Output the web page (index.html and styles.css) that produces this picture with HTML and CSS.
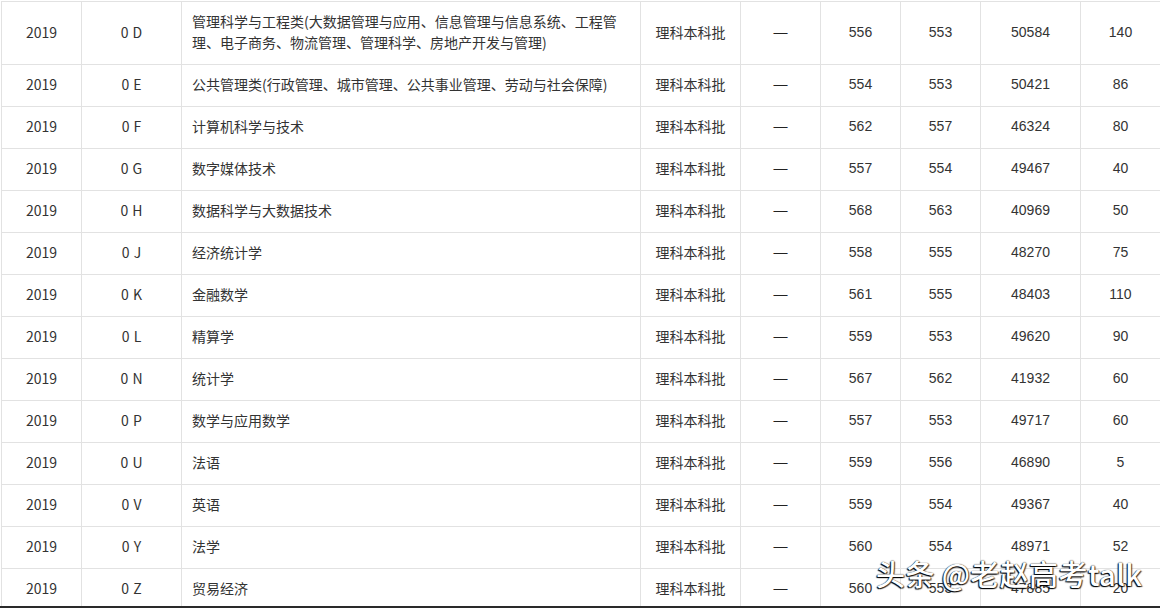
FILE: index.html
```html
<!DOCTYPE html>
<html lang="zh-CN">
<head>
<meta charset="utf-8">
<title>录取分数</title>
<link rel="stylesheet" href="styles.css">
</head>
<body>
<div class="frame">
  <table class="scores">
    <colgroup>
      <col class="c-year"><col class="c-code"><col class="c-major"><col class="c-batch"><col class="c-dash">
      <col class="c-num"><col class="c-num"><col class="c-rank"><col class="c-num">
    </colgroup>
    <tbody>
      <tr><td class="cn">2019</td><td class="cn">0 D</td><td class="major">管理科学与工程类(大数据管理与应用、信息管理与信息系统、工程管理、电子商务、物流管理、管理科学、房地产开发与管理)</td><td class="cn">理科本科批</td><td class="dash">—</td><td>556</td><td>553</td><td>50584</td><td>140</td></tr>
      <tr><td class="cn">2019</td><td class="cn">0 E</td><td class="major">公共管理类(行政管理、城市管理、公共事业管理、劳动与社会保障)</td><td class="cn">理科本科批</td><td class="dash">—</td><td>554</td><td>553</td><td>50421</td><td>86</td></tr>
      <tr><td class="cn">2019</td><td class="cn">0 F</td><td class="major">计算机科学与技术</td><td class="cn">理科本科批</td><td class="dash">—</td><td>562</td><td>557</td><td>46324</td><td>80</td></tr>
      <tr><td class="cn">2019</td><td class="cn">0 G</td><td class="major">数字媒体技术</td><td class="cn">理科本科批</td><td class="dash">—</td><td>557</td><td>554</td><td>49467</td><td>40</td></tr>
      <tr><td class="cn">2019</td><td class="cn">0 H</td><td class="major">数据科学与大数据技术</td><td class="cn">理科本科批</td><td class="dash">—</td><td>568</td><td>563</td><td>40969</td><td>50</td></tr>
      <tr><td class="cn">2019</td><td class="cn">0 J</td><td class="major">经济统计学</td><td class="cn">理科本科批</td><td class="dash">—</td><td>558</td><td>555</td><td>48270</td><td>75</td></tr>
      <tr><td class="cn">2019</td><td class="cn">0 K</td><td class="major">金融数学</td><td class="cn">理科本科批</td><td class="dash">—</td><td>561</td><td>555</td><td>48403</td><td>110</td></tr>
      <tr><td class="cn">2019</td><td class="cn">0 L</td><td class="major">精算学</td><td class="cn">理科本科批</td><td class="dash">—</td><td>559</td><td>553</td><td>49620</td><td>90</td></tr>
      <tr><td class="cn">2019</td><td class="cn">0 N</td><td class="major">统计学</td><td class="cn">理科本科批</td><td class="dash">—</td><td>567</td><td>562</td><td>41932</td><td>60</td></tr>
      <tr><td class="cn">2019</td><td class="cn">0 P</td><td class="major">数学与应用数学</td><td class="cn">理科本科批</td><td class="dash">—</td><td>557</td><td>553</td><td>49717</td><td>60</td></tr>
      <tr><td class="cn">2019</td><td class="cn">0 U</td><td class="major">法语</td><td class="cn">理科本科批</td><td class="dash">—</td><td>559</td><td>556</td><td>46890</td><td>5</td></tr>
      <tr><td class="cn">2019</td><td class="cn">0 V</td><td class="major">英语</td><td class="cn">理科本科批</td><td class="dash">—</td><td>559</td><td>554</td><td>49367</td><td>40</td></tr>
      <tr><td class="cn">2019</td><td class="cn">0 Y</td><td class="major">法学</td><td class="cn">理科本科批</td><td class="dash">—</td><td>560</td><td>554</td><td>48971</td><td>52</td></tr>
      <tr><td class="cn">2019</td><td class="cn">0 Z</td><td class="major">贸易经济</td><td class="cn">理科本科批</td><td class="dash">—</td><td>560</td><td>553</td><td>47885</td><td>20</td></tr>
    </tbody>
  </table>
  <div class="watermark">头条 @老赵高考talk</div>
</div>
</body>
</html>
```
FILE: styles.css
```css
html, body {
  margin: 0;
  padding: 0;
  background: #fff;
}
body {
  width: 1160px;
  height: 608px;
  overflow: hidden;
}
.frame {
  position: relative;
  height: 605px;
  padding: 1px 0 0 1px;
  overflow: hidden;
  border-bottom: 2px solid #2a2a2a;
}
.scores {
  border-collapse: collapse;
  table-layout: fixed;
  width: 1160px;
  color: #333;
  font-family: "Liberation Sans", Arial, sans-serif;
  font-size: 14px;
}
.c-year { width: 80px; }
.c-code { width: 100px; }
.c-major { width: 459px; }
.c-batch { width: 100px; }
.c-dash { width: 80px; }
.c-num { width: 80px; }
.c-rank { width: 100px; }
.scores td {
  border: 1px solid #e2e2e2;
  padding: 9px 4px 11px;
  line-height: 21px;
  text-align: center;
  vertical-align: middle;
  white-space: nowrap;
  overflow: hidden;
}
.scores td.cn {
  font-family: "Noto Sans CJK SC", "Liberation Sans", sans-serif;
  word-spacing: 1px;
}
.scores td.dash {
  font-family: "Liberation Sans", Arial, sans-serif;
  color: #222;
}
.scores td.major {
  font-family: "Noto Sans CJK SC", "Liberation Sans", sans-serif;
  text-align: left;
  white-space: normal;
  padding: 9px 12px 11px 10px;
}
.watermark {
  position: absolute;
  left: 876px;
  top: 553px;
  font-family: "Noto Sans CJK SC", sans-serif;
  font-size: 29px;
  font-weight: 500;
  line-height: 40px;
  color: #fff;
  letter-spacing: 0.4px;
  text-shadow: -1px 1px 1px #000, 1px 1px 1px rgba(0,0,0,0.7), 0 0 1px #000;
  white-space: nowrap;
}
```
